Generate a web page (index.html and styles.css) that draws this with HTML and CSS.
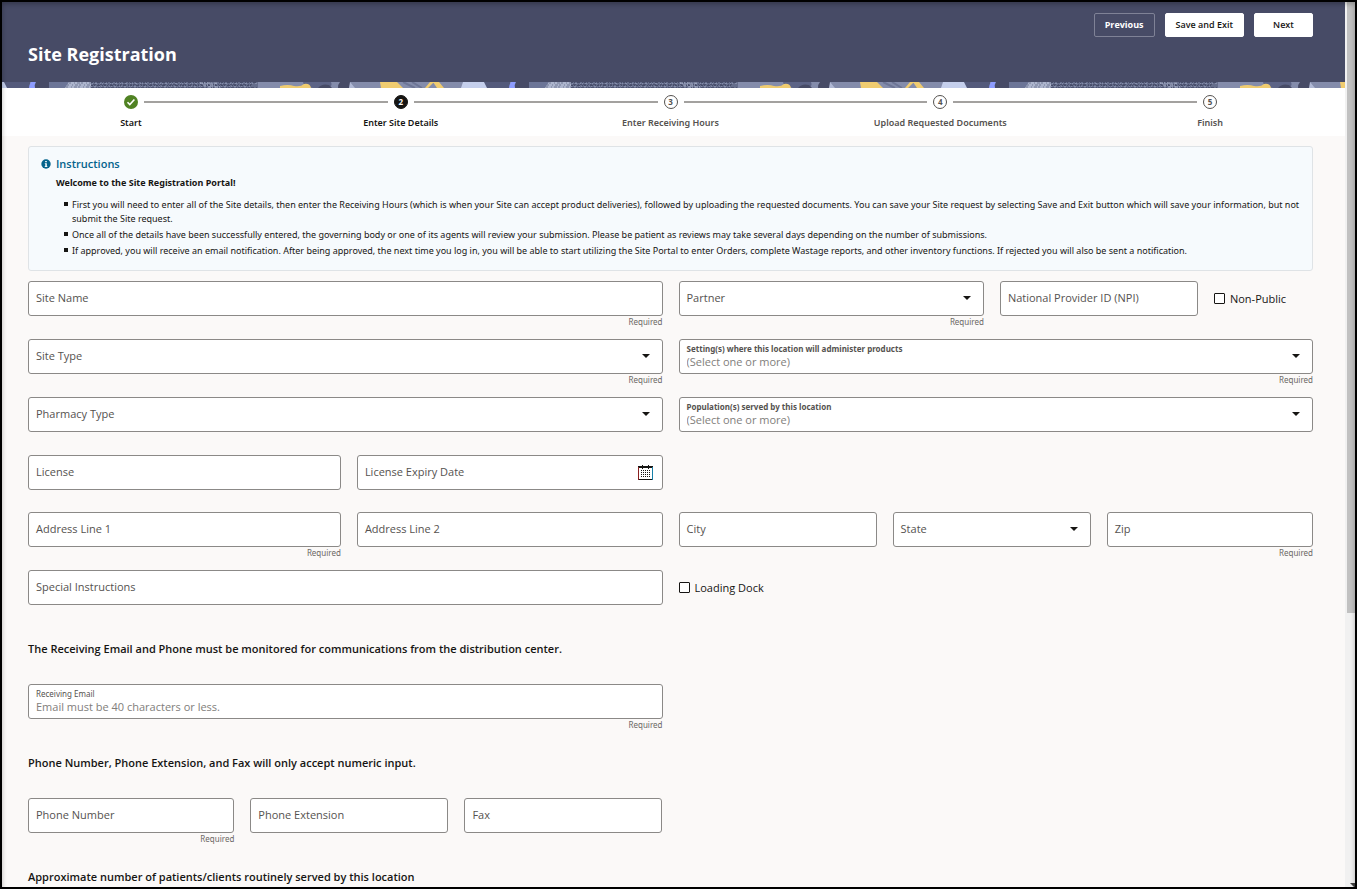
FILE: index.html
```
<!DOCTYPE html>
<html lang="en">
<head>
    <meta charset="UTF-8">
    <meta name="viewport" content="width=device-width, initial-scale=1.0">
    <title>Site Registration</title>
    <link rel="stylesheet" href="styles.css">
</head>
<body>
    <div class="window">
        <div class="page">
            <header class="header">
                <div class="actions">
                    <button type="button" class="button outlined">Previous</button>
                    <button type="button" class="button">Save and Exit</button>
                    <button type="button" class="button">Next</button>
                </div>
                <h1>Site Registration</h1>
            </header>
            <svg class="strip" width="100%" height="6" aria-hidden="true">
                <defs>
                    <pattern id="collage" x="-2" width="480" height="6" patternUnits="userSpaceOnUse">
                        <rect width="480" height="6" fill="#848cab"/>
                        <path d="M0 0h30v6H0z" fill="#545a7b"/>
                        <path d="M0 0h4l3 6H0z" fill="#c5cfec"/>
                        <path d="M31 0h5q-2 3-1 6h-6q0-3 2-6z" fill="#8d9cff"/>
                        <path d="M36 0h13v6H35q-1-3 1-6z" fill="#474b66"/>
                        <path d="M49 0h20l-4 6H49z" fill="#6c7597"/>
                        <path d="M69 0h22v6H65z" fill="#adb5cd"/>
                        <path d="M91 0h167v6H91z" fill="#666e8c"/>
                        <path d="M69 1h22M67 3h24M66 5h25" stroke="#717996" stroke-dasharray="2 3 1 2 3 1"/>
                        <path d="M91 .5h167M91 3.5h160" stroke="#474d69" stroke-dasharray="2 1 1 2 3 2 1 1"/>
                        <path d="M92 1.5h166M91 4.5h160" stroke="#858daa" stroke-dasharray="1 2 2 3 1 1"/>
                        <path d="M93 2.5h160M91 5.5h167" stroke="#4d5370" stroke-dasharray="3 2 1 1 2 1"/>
                        <path d="M200 1h18M203 3h14M208 5h12" stroke="#b2bad2" stroke-dasharray="3 1 1 2"/>
                        <path d="M303 0h28q2 4-3 6h-15q-10-2-10-6z" fill="#5d6486"/>
                        <path d="M318 6q4-5 11-3l3 3z" fill="#474b66"/>
                        <path d="M280 6v-2q8-2 14 0 7 1 10-2 6-1 7 4z" fill="#f0cc70"/>
                        <path d="M340 0h10v6h-12q0-4 2-6z" fill="#474b66"/>
                        <path d="M350 0l5 6h-6z" fill="#b0b8d4"/>
                        <path d="M380 0h17l6 6h-22z" fill="#f0cc70"/>
                        <path d="M403 0l12 6M412 0l10 6" stroke="#6d7595" stroke-width="2"/>
                        <path d="M425 6l5-6h4l-6 6zM433 0h6l5 6h-7z" fill="#f0cc70"/>
                        <path d="M463 0h17v6h-19z" fill="#c5cfec"/>
                    </pattern>
                </defs>
                <rect width="100%" height="6" fill="url(#collage)"/>
            </svg>
            <nav class="progress" aria-label="Progress">
                <ol class="steps">
                    <li class="step">
                        <span class="marker">
                            <svg width="14" height="14" viewBox="0 0 14 14" aria-hidden="true">
                                <circle cx="7" cy="7" r="7" fill="#508223"/>
                                <path d="M3.5 7.2l2.3 2.3 4.6-5" fill="none" stroke="#fff" stroke-width="1.6"/>
                            </svg>
                        </span>
                        <span class="step-label">Start</span>
                    </li>
                    <li class="step current" aria-current="step">
                        <span class="marker"><span class="circle">2</span></span>
                        <span class="step-label">Enter Site Details</span>
                    </li>
                    <li class="step upcoming">
                        <span class="marker"><span class="circle">3</span></span>
                        <span class="step-label">Enter Receiving Hours</span>
                    </li>
                    <li class="step upcoming">
                        <span class="marker"><span class="circle">4</span></span>
                        <span class="step-label">Upload Requested Documents</span>
                    </li>
                    <li class="step upcoming">
                        <span class="marker"><span class="circle">5</span></span>
                        <span class="step-label">Finish</span>
                    </li>
                </ol>
            </nav>
            <main class="content">
                <section class="message">
                    <svg class="info-icon" width="10" height="10" viewBox="0 0 10 10" aria-hidden="true">
                        <circle cx="5" cy="5" r="4.7" fill="#04638c"/>
                        <path d="M4.2 2h1.6v1.3H4.2zM3.8 4.2h2v3h.6v.9H3.7v-.9h.6V5h-.5z" fill="#fff"/>
                    </svg>
                    <div class="message-body">
                        <h2>Instructions</h2>
                        <p>Welcome to the Site Registration Portal!</p>
                        <ul>
                            <li>First you will need to enter all of the Site details, then enter the Receiving Hours (which is when your Site can accept product deliveries), followed by uploading the requested documents. You can save your Site request by selecting Save and Exit button which will save your information, but not submit the Site request.</li>
                            <li>Once all of the details have been successfully entered, the governing body or one of its agents will review your submission. Please be patient as reviews may take several days depending on the number of submissions.</li>
                            <li>If approved, you will receive an email notification. After being approved, the next time you log in, you will be able to start utilizing the Site Portal to enter Orders, complete Wastage reports, and other inventory functions. If rejected you will also be sent a notification.</li>
                        </ul>
                    </div>
                </section>
                <form>
                    <div class="rows">
                        <div class="row">
                            <div class="field">
                                <div class="box"><input type="text" id="siteName" required><label for="siteName">Site Name</label></div>
                                <span class="hint">Required</span>
                            </div>
                            <div class="row partner">
                                <div class="field">
                                    <div class="box">
                                        <select id="partner" required><option></option></select><label for="partner">Partner</label>
                                        <svg class="arrow" width="8" height="4" viewBox="0 0 8 4" aria-hidden="true"><path d="M0 0h8L4 4z"/></svg>
                                    </div>
                                    <span class="hint">Required</span>
                                </div>
                                <div class="field">
                                    <div class="box"><input type="text" id="npi"><label for="npi">National Provider ID (NPI)</label></div>
                                </div>
                                <label class="check"><input type="checkbox">Non-Public</label>
                            </div>
                        </div>
                        <div class="row">
                            <div class="field">
                                <div class="box">
                                    <select id="siteType" required><option></option></select><label for="siteType">Site Type</label>
                                    <svg class="arrow" width="8" height="4" viewBox="0 0 8 4" aria-hidden="true"><path d="M0 0h8L4 4z"/></svg>
                                </div>
                                <span class="hint">Required</span>
                            </div>
                            <div class="field">
                                <div class="box raised strong">
                                    <select id="settings" required><option>(Select one or more)</option></select><label for="settings">Setting(s) where this location will administer products</label>
                                    <svg class="arrow" width="8" height="4" viewBox="0 0 8 4" aria-hidden="true"><path d="M0 0h8L4 4z"/></svg>
                                </div>
                                <span class="hint">Required</span>
                            </div>
                        </div>
                        <div class="row">
                            <div class="field">
                                <div class="box">
                                    <select id="pharmacyType"><option></option></select><label for="pharmacyType">Pharmacy Type</label>
                                    <svg class="arrow" width="8" height="4" viewBox="0 0 8 4" aria-hidden="true"><path d="M0 0h8L4 4z"/></svg>
                                </div>
                            </div>
                            <div class="field">
                                <div class="box raised strong">
                                    <select id="populations"><option>(Select one or more)</option></select><label for="populations">Population(s) served by this location</label>
                                    <svg class="arrow" width="8" height="4" viewBox="0 0 8 4" aria-hidden="true"><path d="M0 0h8L4 4z"/></svg>
                                </div>
                            </div>
                        </div>
                        <div class="row">
                            <div class="row pair">
                                <div class="field">
                                    <div class="box"><input type="text" id="license"><label for="license">License</label></div>
                                </div>
                                <div class="field">
                                    <div class="box">
                                        <input type="text" id="expiry"><label for="expiry">License Expiry Date</label>
                                        <button type="button" class="calendar" aria-label="Select date">
                                            <svg width="15" height="15" viewBox="0 0 15 15" aria-hidden="true">
                                                <path d="M.5 2.5h14v12H.5z" fill="#fff" stroke="#161513"/>
                                                <path d="M0 1h15v2H0zM4 0h1v4H4zM10 0h1v4h-1z" fill="#161513"/>
                                                <path d="M3 5.5h10M3 7.5h10M3 9.5h10M3 11.5h10" stroke="#161513" stroke-dasharray="1 1"/>
                                                <path d="M.5 2v13" stroke="#8a2020"/>
                                                <path d="M14.5 2v13" stroke="#1780a8"/>
                                            </svg>
                                        </button>
                                    </div>
                                </div>
                            </div>
                        </div>
                    </div>
                    <div class="rows address">
                        <div class="row">
                            <div class="row pair">
                                <div class="field">
                                    <div class="box"><input type="text" id="address1" required><label for="address1">Address Line 1</label></div>
                                    <span class="hint">Required</span>
                                </div>
                                <div class="field">
                                    <div class="box"><input type="text" id="address2"><label for="address2">Address Line 2</label></div>
                                </div>
                            </div>
                            <div class="row city">
                                <div class="field">
                                    <div class="box"><input type="text" id="city"><label for="city">City</label></div>
                                </div>
                                <div class="field">
                                    <div class="box">
                                        <select id="state"><option></option></select><label for="state">State</label>
                                        <svg class="arrow" width="8" height="4" viewBox="0 0 8 4" aria-hidden="true"><path d="M0 0h8L4 4z"/></svg>
                                    </div>
                                </div>
                                <div class="field">
                                    <div class="box"><input type="text" id="zip" required><label for="zip">Zip</label></div>
                                    <span class="hint">Required</span>
                                </div>
                            </div>
                        </div>
                        <div class="row">
                            <div class="field">
                                <div class="box"><input type="text" id="special"><label for="special">Special Instructions</label></div>
                            </div>
                            <label class="check"><input type="checkbox">Loading Dock</label>
                        </div>
                    </div>
                    <h3>The Receiving Email and Phone must be monitored for communications from the distribution center.</h3>
                    <div class="row">
                        <div class="field">
                            <div class="box raised">
                                <input type="email" id="email" placeholder="Email must be 40 characters or less." required><label for="email">Receiving Email</label>
                            </div>
                            <span class="hint">Required</span>
                        </div>
                    </div>
                    <h3>Phone Number, Phone Extension, and Fax will only accept numeric input.</h3>
                    <div class="row">
                        <div class="row phone">
                            <div class="field">
                                <div class="box"><input type="tel" id="phone" required><label for="phone">Phone Number</label></div>
                                <span class="hint">Required</span>
                            </div>
                            <div class="field">
                                <div class="box"><input type="tel" id="extension"><label for="extension">Phone Extension</label></div>
                            </div>
                            <div class="field">
                                <div class="box"><input type="tel" id="fax"><label for="fax">Fax</label></div>
                            </div>
                        </div>
                    </div>
                    <h3>Approximate number of patients/clients routinely served by this location</h3>
                </form>
            </main>
        </div>
        <div class="scrollbar" aria-hidden="true">
            <div class="thumb"></div>
            <svg width="5" height="4" viewBox="0 0 5 4"><path d="M0 0h5v4H4z" fill="#444"/></svg>
        </div>
    </div>
</body>
</html>
```
FILE: styles.css
```
* {
    box-sizing: border-box;
}
body {
    margin: 0;
    background-color: #fbf9f8;
    color: #161513;
    font-family: "Open Sans", "Noto Sans", sans-serif;
    font-size: 11px;
}
h1, h2, h3, p, ul, ol {
    margin: 0;
    padding: 0;
}
button, input, select {
    font-family: inherit;
    font-size: inherit;
}
.window {
    position: relative;
    display: flex;
    height: 100vh;
    border: 2px solid #000;
    overflow: hidden;
}
/* soft inner edge, fading out towards the bottom */
.window::after {
    content: "";
    position: absolute;
    inset: 0 0 -8px;
    box-shadow: inset 0 2px 5px rgba(0, 0, 0, 0.28);
    pointer-events: none;
}
.page {
    flex: 1;
    min-width: 0;
    overflow: hidden;
}
.header {
    padding: 11px 32px 14px 26px;
    background-color: #474b66;
}
.header h1 {
    margin-top: 3px;
    color: #fff;
    font-size: 18px;
    font-weight: 700;
    line-height: 28px;
}
.actions {
    display: flex;
    justify-content: flex-end;
    gap: 10px;
}
.button {
    height: 24px;
    min-width: 59px;
    padding: 0 10px;
    border: 1px solid #fff;
    border-radius: 2px;
    background-color: #fff;
    color: #161513;
    font-size: 9px;
    font-weight: 600;
    line-height: 20px;
    cursor: pointer;
}
.button.outlined {
    border-color: #7f8296;
    background-color: transparent;
    color: #fff;
    font-weight: 700;
}
.strip {
    display: block;
}
.progress {
    padding: 7px 0 6px;
    background-color: #fff;
}
.steps {
    display: flex;
    margin-left: -6px;
    list-style: none;
}
.step {
    flex: 1;
    text-align: center;
}
.marker {
    display: flex;
    align-items: center;
    gap: 6px;
}
.marker::before,
.marker::after {
    content: "";
    flex: 1;
    height: 2px;
    background-color: #a3a19f;
}
.step:first-child .marker::before,
.step:last-child .marker::after {
    background-color: transparent;
}
.circle {
    width: 14px;
    height: 14px;
    border: 1px solid #161513;
    border-radius: 50%;
    background-color: #161513;
    color: #fff;
    font-size: 8px;
    font-weight: 700;
    line-height: 12px;
}
.upcoming .circle {
    border-color: #55524f;
    background-color: #fff;
    color: #55524f;
}
.step-label {
    display: block;
    margin-top: 7px;
    font-family: "Noto Sans", sans-serif;
    font-size: 9px;
    font-weight: 600;
    line-height: 14px;
}
.upcoming .step-label {
    color: #55524f;
}
.content {
    padding: 10px 32px 0 26px;
}
.message {
    display: flex;
    gap: 5px;
    margin-bottom: 10px;
    padding: 9px 8px 10px 12px;
    border: 1px solid #dfe3e6;
    border-radius: 3px;
    background-color: #f6fafd;
    font-family: "Noto Sans", sans-serif;
    font-size: 9px;
}
.info-icon {
    flex: none;
    margin-top: 3px;
}
.message h2 {
    color: #04638c;
    font-family: "Open Sans", sans-serif;
    font-size: 11px;
    font-weight: 600;
    line-height: 16px;
}
.message p {
    margin-bottom: 4px;
    font-weight: 700;
    line-height: 22px;
}
.message ul {
    padding-left: 16px;
    list-style: none;
}
.message li {
    margin-bottom: 2px;
    line-height: 14px;
}
.message li::before {
    content: "";
    float: left;
    width: 4px;
    height: 4px;
    margin: 4px 0 0 -8px;
    background-color: #161513;
}
.rows {
    display: flex;
    flex-direction: column;
    gap: 9px;
}
.address {
    margin-top: 8px;
}
.row {
    display: grid;
    grid-template-columns: 1fr 1fr;
    gap: 16px;
}
.partner {
    grid-template-columns: 37fr 24fr 12fr;
}
.pair {
    grid-template-columns: 43fr 42fr;
}
.city {
    grid-template-columns: 24fr 24fr 25fr;
}
.phone {
    grid-template-columns: 25fr 24fr 24fr;
}
.field {
    min-width: 0;
    min-height: 49px;
}
/* the control and its label share one grid cell */
.box {
    display: grid;
    grid-template-columns: minmax(0, 1fr);
    grid-template-rows: 35px;
    align-items: center;
}
.box > * {
    grid-area: 1 / 1;
}
.box input,
.box select {
    width: 100%;
    height: 100%;
    padding: 0 7px;
    border: 1px solid #8b8987;
    border-radius: 3px;
    background-color: #fff;
    color: #817e7b;
    appearance: none;
}
.box label {
    margin-left: 8px;
    padding-bottom: 2px;
    color: #55524f;
    line-height: 16px;
    pointer-events: none;
}
.raised input,
.raised select {
    padding-top: 9px;
}
.raised input::placeholder {
    color: #817e7b;
}
.box.raised label {
    align-self: start;
    margin-top: 4px;
    font-family: "Noto Sans", sans-serif;
    font-size: 8px;
    line-height: 12px;
}
.box.strong label {
    font-weight: 700;
}
.arrow {
    justify-self: end;
    margin-right: 13px;
    margin-bottom: 2px;
    fill: #161513;
    pointer-events: none;
}
.calendar {
    justify-self: end;
    height: 15px;
    margin-right: 10px;
    padding: 0;
    border: none;
    background: none;
    cursor: pointer;
}
.calendar svg {
    display: block;
}
.hint {
    display: block;
    color: #6b6865;
    font-family: "Noto Sans", sans-serif;
    font-size: 8px;
    line-height: 12px;
    text-align: right;
}
.check {
    display: flex;
    align-items: center;
    gap: 5px;
    height: 34px;
    white-space: nowrap;
}
.check input {
    width: 11px;
    height: 11px;
    margin: 0;
    border: 1px solid #161513;
    border-radius: 1px;
    background-color: #fff;
    appearance: none;
}
.check input:checked {
    background-color: #161513;
}
h3 {
    margin: 22px 0 27px;
    font-size: 11px;
    font-weight: 600;
    line-height: 16px;
}
.scrollbar {
    display: flex;
    flex-direction: column;
    justify-content: space-between;
    align-items: flex-end;
    width: 10px;
    padding-left: 2px;
    background-color: #f1f1f1;
}
.thumb {
    width: 100%;
    height: 69%;
    background-color: #c1c1c1;
}
```
